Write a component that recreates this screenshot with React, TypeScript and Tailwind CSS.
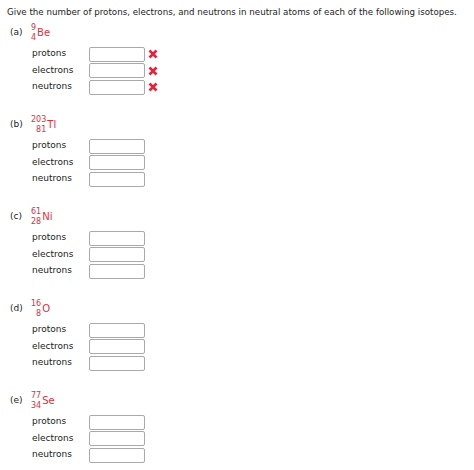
import React from "react";

const items = [
  { l: "(a)", mass: "9", z: "4", sym: "Be", wrong: true },
  { l: "(b)", mass: "203", z: "81", sym: "Tl", wrong: false },
  { l: "(c)", mass: "61", z: "28", sym: "Ni", wrong: false },
  { l: "(d)", mass: "16", z: "8", sym: "O", wrong: false },
  { l: "(e)", mass: "77", z: "34", sym: "Se", wrong: false },
];

function X() {
  return (
    <svg width="10" height="10" viewBox="0 0 10 10" className="ml-[3px]">
      <path d="M1.5 1.5 L8.5 8.5 M8.5 1.5 L1.5 8.5" stroke="#e8203a" strokeWidth="2.6" strokeLinecap="butt" />
    </svg>
  );
}

export default function App() {
  return (
    <div className="w-[474px] h-[470px] bg-white text-[#222] overflow-hidden" style={{ fontFamily: '"DejaVu Sans", Verdana, sans-serif' }}>
      <div className="pl-[7px] pt-[4px] h-[20px] text-[8.7px] leading-[16px] whitespace-nowrap">
        Give the number of protons, electrons, and neutrons in neutral atoms of each of the following isotopes.
      </div>
      <div className="flex flex-col">
        {items.map((it, i) => (
          <div key={i} className={i === 0 ? "mt-[2px]" : "mt-[19px]"}>
            <div className="flex items-center h-[22px] pl-[10px] text-[9px]">
              <span className="w-[21px]">{it.l}</span>
              <span className="inline-flex items-center text-[#e0303c]">
                <span className="flex flex-col items-end text-[8px] leading-[10px] -mt-[1px]">
                  <span>{it.mass}</span>
                  <span>{it.z}</span>
                </span>
                <span className="text-[10px] -mt-[2px] ml-[1px]">{it.sym}</span>
              </span>
            </div>
            <div className="mt-[2px] flex flex-col gap-[0.5px] pl-[32px] text-[9px]">
              {["protons", "electrons", "neutrons"].map((r) => (
                <div key={r} className="flex items-center h-[16px]">
                  <span className="w-[57px]">{r}</span>
                  <div className="w-[56px] h-[15px] border border-[#a9a9a9] rounded-[2px] bg-white" />
                  {it.wrong && <X />}
                </div>
              ))}
            </div>
          </div>
        ))}
      </div>
    </div>
  );
}
